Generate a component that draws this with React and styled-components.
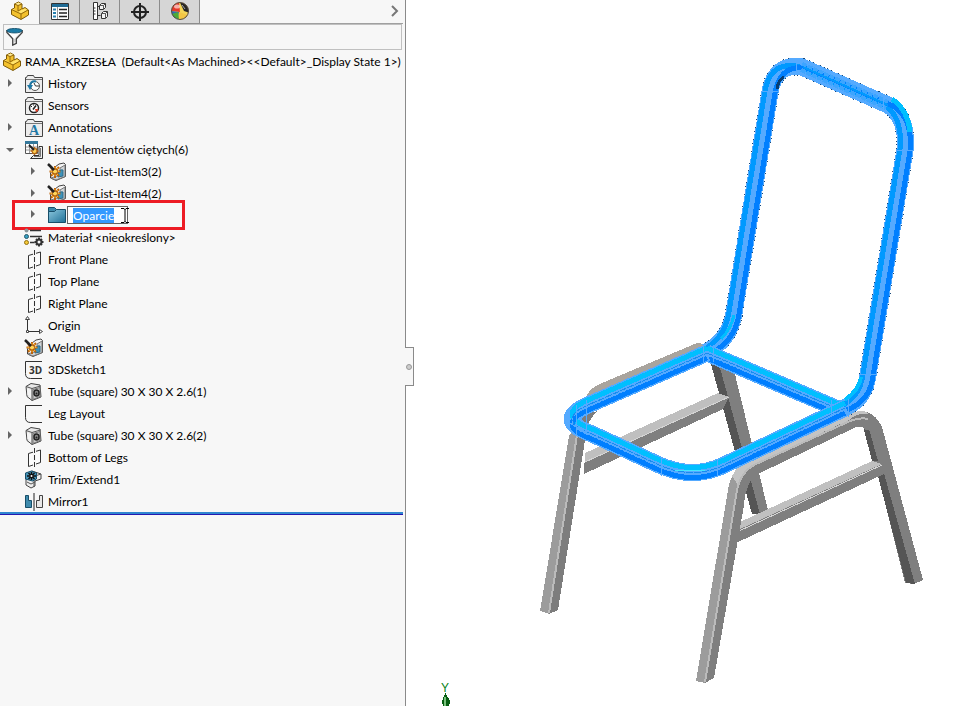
import React, { useEffect, useRef } from "react";
import styled, { createGlobalStyle } from "styled-components";

const GlobalStyle = createGlobalStyle`
  *, *::before, *::after { box-sizing: border-box; }
  body {
    margin: 0;
    background: #fff;
    color: #000;
    font: 12px/22px Lato, "Open Sans", sans-serif;
    font-variant-ligatures: none;
  }
  svg { display: block; flex-shrink: 0; }
`;

const Workspace = styled.main`
  display: grid;
  grid-template-columns: minmax(406px, 42%) minmax(0, 1fr);
  min-height: 100vh;
`;

const Panel = styled.aside`
  position: relative;
  padding-right: 2px;
  background: #f7f7f7;
  border-right: 1px solid #8a8a8a;
`;

const Toolbar = styled.div`
  display: flex;
  height: 24px;
`;

const TabList = styled.div`
  display: flex;
`;

const Tab = styled.button`
  display: flex;
  align-items: center;
  justify-content: center;
  width: 40px;
  height: 24px;
  padding: 0 0 2px;
  border: solid #8c8c8c;
  border-width: ${(p) => (p.$active ? "0 1px 0 0" : "0 1px 1px 0")};
  background: ${(p) => (p.$active ? "#f7f7f7" : "#d6d6d6")};
`;

const ToolbarRest = styled.div`
  display: flex;
  flex: 1;
  align-items: center;
  justify-content: flex-end;
  padding: 0 4px 2px 0;
  border-bottom: 1px solid #a0a0a0;
`;

const IconButton = styled.button`
  padding: 0;
  border: 0;
  background: none;
`;

const FilterBar = styled.label`
  display: flex;
  align-items: center;
  height: 26px;
  margin: 0 1px 0 3px;
  padding-left: 2px;
  border: 1px solid #c0c0c0;
`;

const FilterInput = styled.input`
  flex: 1;
  min-width: 0;
  height: 20px;
  border: 0;
  outline: 0;
  background: transparent;
  font: inherit;
`;

const Root = styled.div`
  display: flex;
  align-items: center;
  gap: 3px;
  height: 23px;
  padding-left: 2px;
  white-space: pre;
`;

const Tree = styled.ul`
  margin: 0;
  padding: 0 0 1px;
  list-style: none;
  border-bottom: 1px solid #2418b0;
  box-shadow: inset 0 -2px #2f86d0;
`;

const Row = styled.li`
  position: relative;
  display: flex;
  align-items: center;
  height: 22px;
  padding: 0 0 ${(p) => (p.$editing ? 2 : 0)}px ${(p) => (p.$level ? 28 : 5)}px;
  white-space: pre;
`;

const Toggle = styled.button`
  width: 10px;
  height: 12px;
  margin-right: 9px;
  padding: 0;
  border: 0;
  background: none;
`;

const NoToggle = styled.span`
  width: 19px;
`;

const IconSlot = styled.span`
  width: 20px;
  height: 20px;
  margin-right: 4px;
`;

const NameInput = styled.input`
  width: 61px;
  height: 18px;
  margin-left: -4px;
  padding: 0 0 0 5px;
  border: 1px solid #646464;
  outline: 0;
  background: #fff;
  color: #000;
  font: inherit;
  line-height: 14px;
  &::selection { background: #3399ff; color: #fff; }
`;

const Highlight = styled.div`
  position: absolute;
  top: -5px;
  left: 12px;
  width: 173px;
  height: 30px;
  border: 3px solid #ed1c24;
  pointer-events: none;
`;

const TextCursor = styled.svg`
  position: absolute;
  left: 120px;
  top: 2px;
`;

const Splitter = styled.button`
  position: absolute;
  top: 347px;
  right: -9px;
  display: flex;
  align-items: center;
  justify-content: center;
  width: 9px;
  height: 39px;
  padding: 0;
  border: 1px solid #8a8a8a;
  border-left: 0;
  background: #f7f7f7;
`;

const Knob = styled.span`
  width: 6px;
  height: 6px;
  border: 1px solid #999;
  border-radius: 50%;
  background: #ccc;
`;

const Viewport = styled.section`
  display: flex;
  justify-content: center;
  background: #fff;
`;

const Drawing = styled.svg`
  width: 100%;
  max-height: 100vh;
`;

const AxisLabel = styled.text`
  font: 12px "Liberation Sans", sans-serif;
  fill: #078216;
`;

const IconLetter = styled.text`
  font: ${(p) => (p.$serif ? 'bold 14px "Liberation Serif", serif' : 'bold 10px "Open Sans", sans-serif')};
  fill: ${(p) => (p.$serif ? "#1f78a5" : "#333")};
`;

const Glyph = ({ children, size = 20 }) => (
  <svg width={size} height={size} viewBox="0 0 20 20" fill="none" aria-hidden="true">
    {children}
  </svg>
);

const PartIcon = () => (
  <Glyph>
    <path d="M1.500 8.500 4.500 7V3L8.500 1 12 3v5l3-1.500L18.500 9v5L11 18.500l-9.500-5z" fill="#f3c12d" stroke="#7d5a08" />
    <path d="M2.500 8.500 4.500 7.500V9l3 2 4-2 3.500-1.500L17.500 9 11 12.500z" fill="#ffe36c" />
    <path d="M5 3l3.500-1.500L11.500 3 8 4.500z" fill="#ffed9a" />
    <path d="M8 4.500V10l3.500-2M1.500 8.500l9.500 4.500 7-4M11 13v5M4.500 3 8 4.500 12 3" stroke="#94690c" />
  </Glyph>
);

const ListIcon = () => (
  <Glyph>
    <path d="M1.500 2.500h17v16h-17z" fill="#fff" stroke="#333" />
    <path d="M2 3h16v3H2z" fill="#206c96" />
    <path d="M7.500 6v12" stroke="#999" />
    <path d="M3 8.500h3M3 12h3M3 15.500h3" stroke="#2880ae" strokeWidth="2" />
    <path d="M9 8.500h8M9 12h8M9 15.500h8" stroke="#222" strokeWidth="1.500" />
  </Glyph>
);

const ConfigIcon = () => (
  <Glyph>
    <path d="M3.500 1.500h4v17h-4zM7.500 5.500h3M7.500 14.500h3" fill="#fff" stroke="#333" />
    <path d="M3.500 7h2M3.500 10h2M3.500 13h2" stroke="#333" />
    <path d="m9.500 4.500 2-2h4v4l-2 2h-4zM11.500 12.500l2-2h4v5l-2 2h-4z" fill="#f3f3f3" stroke="#333" />
    <path d="M9.500 4.500h4v4M13.500 4.500l2-2M11.500 12.500h4v5M15.500 12.500l2-2" stroke="#555" />
  </Glyph>
);

const TargetIcon = () => (
  <Glyph>
    <circle cx="10" cy="11" r="6" stroke="#222" strokeWidth="2" />
    <path d="M10 2v18M1 11h18" stroke="#222" strokeWidth="2" />
  </Glyph>
);

const BallIcon = () => (
  <Glyph>
    <circle cx="10" cy="10" r="8.500" fill="#f4d557" />
    <path d="M9 1.500A8.500 8.500 0 0 0 1.500 10L10 11z" fill="#e8392b" />
    <path d="m1.500 10 7.500 1-1 7A8.500 8.500 0 0 1 1.500 10z" fill="#3269b4" />
    <path d="m8 18 1-7 9 3a8.500 8.500 0 0 1-10 4z" fill="#f3c644" />
    <path d="m2 13 6-2 1 7q-5-1-7-5z" fill="#4daa36" />
    <path d="M10 1.500a8.500 8.500 0 0 1 8.500 10L14 10z" fill="#252525" />
    <ellipse cx="7" cy="5.500" rx="3" ry="2" fill="#fff" opacity=".6" />
    <path d="m12 4 3 4" stroke="#fff" opacity=".6" />
    <circle cx="10" cy="10" r="8.500" stroke="#574b40" />
  </Glyph>
);

const FunnelIcon = () => (
  <Glyph size={18}>
    <path d="M1 3v2l6.500 7v7l4-2v-5L18 5V3z" fill="#fff" stroke="#444" strokeWidth="1.500" />
    <path d="M10 12v4M11 11l5-5" stroke="#999" />
    <ellipse cx="9.500" cy="3" rx="8.500" ry="2.500" fill="#1c7ba5" stroke="#19546f" />
  </Glyph>
);

const FolderBase = () => (
  <>
    <path d="M1.500 18.500v-15h1l1-2h6l1 2h8v15z" fill="#ececec" stroke="#444" />
    <path d="M2 5.500h16" stroke="#777" />
  </>
);

const HistoryIcon = () => (
  <Glyph>
    <FolderBase />
    <circle cx="11" cy="12" r="4.500" fill="#fff" stroke="#555" />
    <path d="m10 9 1.500 3H15" stroke="#333" />
    <path d="M12 7.500C8 6.500 6 9 6 12" stroke="#1f78a5" strokeWidth="2" />
    <path d="m3 11 3 5 3-5z" fill="#1f78a5" />
  </Glyph>
);

const SensorIcon = () => (
  <Glyph>
    <FolderBase />
    <circle cx="10" cy="12" r="4.500" fill="#fff" stroke="#222" strokeWidth="1.500" />
    <path d="m9 13.500 3-4" stroke="#222" strokeWidth="1.500" />
    <path d="M11 13h3v2l-2 1z" fill="#e23b24" />
    <path d="M7 10.500h1M9 9h1" stroke="#222" />
  </Glyph>
);

const AnnotationIcon = () => (
  <Glyph>
    <FolderBase />
    <IconLetter $serif x="5" y="17">A</IconLetter>
  </Glyph>
);

const WeldmentIcon = () => (
  <Glyph>
    <path d="m8 5 4-3 5-1 1.500 1.500v12L9 18.500 3.500 16v-5z" fill="#f4f4f4" stroke="#444" />
    <path d="m9 18 9-3.500V3L13 6v7L4 16z" fill="#cfd3d6" stroke="#777" />
    <path d="M11 12q1-5 5-4v6l-5 1z" fill="#3c92ba" stroke="#2d6a88" />
    <path d="M8 4v12M2.500 9.500h11M4 6l8 8M12 5l-8 9" stroke="#bd630b" strokeWidth="2" />
    <path d="M8 5v9M3.500 9.500h9M5 7l6 6M11 6l-6 7" stroke="#f8b22a" />
    <circle cx="8" cy="9.500" r="2.500" fill="#ffd55a" stroke="#a45309" />
    <path d="m1 2 6 6" stroke="#222" strokeWidth="2.500" />
    <path d="m3 2 3 3" stroke="#999" />
  </Glyph>
);

const CutListIcon = () => (
  <Glyph>
    <path d="M1.500 1.500h12v12h-12z" fill="#fff" stroke="#555" />
    <path d="M1 1h13v3H1z" fill="#34789b" />
    <path d="M2 7h11M2 10h11M5.500 4v9M9.500 4v9" stroke="#999" />
    <path d="M15 6.500h3.500v12h-12l3-3H15z" fill="#eee" stroke="#333" />
    <path d="M16.500 8v8.500H10" stroke="#777" />
    <path d="M10.500 7v8M6.500 11h8M8 8.500l5 5M13 8.500l-5 5" stroke="#c16a12" strokeWidth="1.500" />
    <circle cx="10.500" cy="11" r="2.500" fill="#ffcc50" stroke="#a65a12" />
    <path d="m5 5 5 5" stroke="#222" strokeWidth="2" />
  </Glyph>
);

const FolderIcon = () => (
  <Glyph>
    <defs>
      <linearGradient id="folder-blue" x2="1" y2="1">
        <stop stopColor="#8dc9df" />
        <stop offset="1" stopColor="#1f6f96" />
      </linearGradient>
    </defs>
    <path d="M1.500 17.500v-15h6l2 2h8v13z" fill="#3d88aa" stroke="#174e69" />
    <path d="M1.500 17.500V6.500h6l2-2h9v13z" fill="url(#folder-blue)" stroke="#174e69" />
  </Glyph>
);

const MaterialIcon = () => (
  <Glyph>
    <circle cx="2.500" cy="2.500" r="2" fill="#8b979b" />
    <circle cx="2.500" cy="8.500" r="2" fill="#36a0c4" stroke="#245768" />
    <circle cx="2.500" cy="14.500" r="2" fill="#f5c838" stroke="#927111" />
    <path d="M6 2.500h11M6 8.500h12M6 14.500h5" stroke="#333" strokeWidth="1.500" />
    <circle cx="15" cy="14" r="4.500" fill="#f7f7f7" />
    <circle cx="15" cy="14" r="2.500" stroke="#333" strokeWidth="2" />
    <path d="M15 9.500v2M15 16.500v2M10.500 14h2M17.500 14h2M12 11l1.500 1.500M18 11l-1.500 1.500M12 17l1.500-1.500M18 17l-1.500-1.500" stroke="#333" strokeWidth="2" />
  </Glyph>
);

const PlaneIcon = () => (
  <Glyph>
    <path d="M4.500 5.500 16.500 2v12.500l-12 4z" fill="#fcfcfc" stroke="#333" />
    <path d="M10.500 0v20" stroke="#f7f7f7" strokeWidth="3" />
    <path d="M10.500 0v20" stroke="#333" strokeDasharray="5 2" />
  </Glyph>
);

const OriginIcon = () => (
  <Glyph>
    <path d="M3.500 4v11.500H16" stroke="#333" />
    <path d="m3.500.5-2 3h4zM18.500 15.500l-3-2v4zM2.500 14.500h2v2h-2z" fill="#fff" stroke="#444" />
  </Glyph>
);

const SketchIcon = ({ letters }) => (
  <Glyph>
    <path d="M18 1.500H1.500v12q0 5 5 5H18" stroke="#333" />
    {letters && <IconLetter x="5" y="14">3D</IconLetter>}
  </Glyph>
);

const TubeIcon = () => (
  <Glyph>
    <path d="m2 4.500 5-3L16 3l1 12-9 3.500-5-4z" fill="#e8e8e8" stroke="#444" />
    <path d="m2 4.500 6 2L16.500 4M8 6.500v12" stroke="#555" />
    <path d="m9 7.500 7-2v9l-7 3z" fill="#ccc" stroke="#777" />
    <ellipse cx="12.500" cy="11" rx="2.500" ry="3" fill="#888" stroke="#222" strokeWidth="1.500" />
    <circle cx="12.500" cy="11.500" r="1" fill="#222" />
    <path d="M4 7v6M6 8v7" stroke="#fff" />
  </Glyph>
);

const TrimIcon = () => (
  <Glyph>
    <path d="m2 5 6-4 9 3v5l-6 2v5l-4 2-5-3z" fill="#eee" stroke="#444" />
    <path d="m11 6 6-2M10 7v10M3 12l4 2 4-2" stroke="#555" />
    <path d="m1.500 3 6-2 5 2v6l-4 2-7-2z" fill="#4593b7" stroke="#174d69" />
    <path d="M3 6h9M7.500 2v8M4.500 3l6 6M10.500 3l-6 6" stroke="#111" strokeWidth="1.500" />
    <circle cx="7.500" cy="6" r="1" fill="#fff" />
  </Glyph>
);

const MirrorIcon = () => (
  <Glyph>
    <path d="M1.500 3.500h3v5h3v7h-6z" fill="#3f8bad" stroke="#174e69" />
    <path d="M10 1v18" stroke="#222" />
    <path d="M18.500 3.500h-3v5h-3v7h6z" fill="#e8e8e8" stroke="#444" />
  </Glyph>
);

const items = [
  { name: "History", icon: HistoryIcon, fold: "closed" },
  { name: "Sensors", icon: SensorIcon },
  { name: "Annotations", icon: AnnotationIcon, fold: "closed" },
  { name: "Lista elementów ciętych(6)", icon: CutListIcon, fold: "open" },
  { name: "Cut-List-Item3(2)", icon: WeldmentIcon, fold: "closed", level: 1 },
  { name: "Cut-List-Item4(2)", icon: WeldmentIcon, fold: "closed", level: 1 },
  { name: "Oparcie", icon: FolderIcon, fold: "closed", level: 1, editing: true },
  { name: "Materiał <nieokreślony>", icon: MaterialIcon },
  { name: "Front Plane", icon: PlaneIcon },
  { name: "Top Plane", icon: PlaneIcon },
  { name: "Right Plane", icon: PlaneIcon },
  { name: "Origin", icon: OriginIcon },
  { name: "Weldment", icon: WeldmentIcon },
  { name: "3DSketch1", icon: () => <SketchIcon letters /> },
  { name: "Tube (square) 30 X 30 X 2.6(1)", icon: TubeIcon, fold: "closed" },
  { name: "Leg Layout", icon: SketchIcon },
  { name: "Tube (square) 30 X 30 X 2.6(2)", icon: TubeIcon, fold: "closed" },
  { name: "Bottom of Legs", icon: PlaneIcon },
  { name: "Trim/Extend1", icon: TrimIcon },
  { name: "Mirror1", icon: MirrorIcon },
];

const tabs = [
  { label: "Feature tree", icon: PartIcon, active: true },
  { label: "Properties", icon: ListIcon },
  { label: "Configurations", icon: ConfigIcon },
  { label: "Dimensions", icon: TargetIcon },
  { label: "Display", icon: BallIcon },
];

function NameEditor({ name }) {
  const ref = useRef(null);
  useEffect(() => {
    ref.current.focus();
    ref.current.select();
  }, []);
  return (
    <>
      <NameInput ref={ref} aria-label="Name" defaultValue={name} spellCheck={false} />
      <Highlight />
      <TextCursor width="10" height="17" viewBox="0 0 10 17" fill="none" aria-hidden="true">
        <path d="M1 1.500h3l1 1 1-1h3M1 15.500h3l1-1 1 1h3M5 2v13" stroke="#000" />
      </TextCursor>
    </>
  );
}

function TreeRow({ item }) {
  const Icon = item.icon;
  return (
    <Row $level={item.level} $editing={item.editing}>
      {item.fold ? (
        <Toggle aria-label={`Toggle ${item.name}`} aria-expanded={item.fold === "open"}>
          <svg width="10" height="10" viewBox="0 0 10 10" aria-hidden="true">
            <path d={item.fold === "open" ? "M1 3h8L5 7z" : "M3 0v8l4-4z"} fill="#666" />
          </svg>
        </Toggle>
      ) : (
        <NoToggle />
      )}
      <IconSlot><Icon /></IconSlot>
      {item.editing ? <NameEditor name={item.name} /> : <span>{item.name}</span>}
    </Row>
  );
}

const seat =
  "M707 353 588 405Q567 414 574 424Q578 429 592 434L657 464Q691 480 722 466L845 408";
const brace = "M707 353 838 409";
const backrest =
  "M706 352Q730 340 734 313L770 92Q775 63 802 67L888 105Q908 117 905 150L868 375Q865 400 842 409";

function SteelFrame() {
  return (
    <g>
      <path d="M711 362 732 362 768 510 763 514 752 513z" fill="#7f7f7f" />
      <path d="M711 364h8l41 150h-8z" fill="#555" />
      <path d="M587 395Q590 388 602 383L697 343 712 345 707 353 585 410z" fill="#a9a49e" />
      <path d="m585 453 133-60 11 4-6 12-139 65z" fill="#7f7f7f" />
      <path d="m585 453 133-60 11 4-144 65z" fill="#bfbfbf" />
      <path d="m585 462 144-65" stroke="#d4d4d4" />
      <path d="M569 436 585 414 598 411Q587 420 586 434L558 610 549 614 540 611z" fill="#7d7d7d" />
      <path d="M569 436 578 426 577 438 549 614 540 611z" fill="#9c9c9c" />
      <path d="m577 435-28 178" stroke="#bbb" strokeWidth="2" />

      <path d="M865 422 882 427 923 580 914 584 905 583z" fill="#7f7f7f" />
      <path d="M865 427h6l44 157-9-1z" fill="#555" />
      <path d="M866 421 880 423 891 464 875 464z" fill="#7f7f7f" />
      <path d="m740 522 132-61 10 3 2 10-146 68z" fill="#7f7f7f" />
      <path d="m740 522 132-61 10 3-144 66z" fill="#c0c0c0" />
      <path d="m739 531 143-66" stroke="#d4d4d4" />
      <path d="M863 426 869 429 878 461 872 461z" fill="#555" />

      <path
        d="M696 681 729 484Q735 465 752 458L848 415Q871 404 882 427L866 430Q861 424 852 429L760 473Q746 479 744 505L714 678 705 683z"
        fill="#7f7f7f"
      />
      <path d="M696 681 729 484Q735 465 752 458L759 461Q741 469 737 490L705 683z" fill="#9c9c9c" />
      <path d="M732 476Q738 464 752 458L848 415Q858 409 867 412L868 414Q858 412 849 420L757 463Q744 468 738 485z" fill="#c4c4c4" />
      <path d="M705 682 737 490Q741 472 754 465L850 421Q860 417 868 419" fill="none" stroke="#bbb" strokeWidth="2" />
    </g>
  );
}

function SelectedTube({ d, upper, lower, dx, dy, ridges }) {
  return (
    <g fill="none" strokeLinejoin="round">
      {!ridges && <path d={d} stroke="#174879" strokeWidth="18" strokeDasharray="1 3" />}
      <path d={d} stroke="#55aaff" strokeWidth="17" />
      <g transform={`translate(${-dx} ${-dy})`}>
        <path d={d} stroke={upper} strokeWidth="5" />
      </g>
      <g transform={`translate(${dx} ${dy})`}>
        <path d={d} stroke={lower} strokeWidth="5" />
      </g>
      {ridges && (
        <>
          <path d={d} stroke="#168cf0" strokeWidth="1" strokeDasharray="7 1" />
          <g transform="translate(0 2)">
            <path d={d} stroke="#55aaff" strokeDasharray="3 1" />
          </g>
        </>
      )}
    </g>
  );
}

function Chair() {
  return (
    <Drawing viewBox="406 0 555 706" role="img" aria-label="Chair frame" shapeRendering="crispEdges">
      <SteelFrame />
      <SelectedTube d={backrest} upper="#0099ff" lower="#007fff" dx={5} dy={1} />
      <path d="M802 64 888 102M801 70 886 108" stroke="#3da5ff" strokeWidth="4" strokeDasharray="5 1" />
      <path d="M803 67 888 105" stroke="#0099ff" strokeWidth="2" />
      <path d="M892 99Q908 110 910 132" fill="none" stroke="#00bfff" strokeWidth="5" />
      <path d="M777 89Q778 80 784 77" fill="none" stroke="#063d73" strokeWidth="3" />
      <path d="M721 339Q731 329 734 315" fill="none" stroke="#00bfff" strokeWidth="3" />
      <path d="M845 400Q859 390 861 377" fill="none" stroke="#00bfff" strokeWidth="4" />
      <SelectedTube d={brace} upper="#00bfff" lower="#007fff" dx={0} dy={5} ridges />
      <SelectedTube d={seat} upper="#00bfff" lower="#007fff" dx={0} dy={5} ridges />
      <g fill="none" stroke="#55aaff">
        <path d="M576 405v31M586 400v35M566 421l20 11M661 458v18M717 460v16M703 344v18M713 345v17M831 400v16M848 399v18" />
        <path d="M762 91h17M896 150h18M860 374h17M796 59v16M883 95v16" />
        <path d="M675 470h30" stroke="#42e5ff" />
      </g>
      <g>
        <AxisLabel x="441" y="692">Y</AxisLabel>
        <path d="m445.500 693-4 9 2 4h5l2-4z" fill="#075f12" />
        <path d="M445 697v9" stroke="#7ac27d" strokeWidth="2" />
      </g>
    </Drawing>
  );
}

export default function App() {
  return (
    <Workspace>
      <GlobalStyle />
      <Panel>
        <Toolbar>
          <TabList>
            {tabs.map(({ label, icon: Icon, active }) => (
              <Tab key={label} $active={active} aria-label={label}><Icon /></Tab>
            ))}
          </TabList>
          <ToolbarRest>
            <IconButton aria-label="More tabs">
              <svg width="9" height="12" viewBox="0 0 9 12" fill="none" aria-hidden="true">
                <path d="m2 1 5 5-5 5" stroke="#777" strokeWidth="2" />
              </svg>
            </IconButton>
          </ToolbarRest>
        </Toolbar>
        <FilterBar>
          <FunnelIcon />
          <FilterInput aria-label="Filter" />
        </FilterBar>
        <Root>
          <PartIcon />
          <span>{"RAMA_KRZESŁA  (Default<As Machined><<Default>_Display State 1>)"}</span>
        </Root>
        <Tree>
          {items.map((item) => <TreeRow key={item.name} item={item} />)}
        </Tree>
        <Splitter aria-label="Collapse panel"><Knob /></Splitter>
      </Panel>
      <Viewport><Chair /></Viewport>
    </Workspace>
  );
}
